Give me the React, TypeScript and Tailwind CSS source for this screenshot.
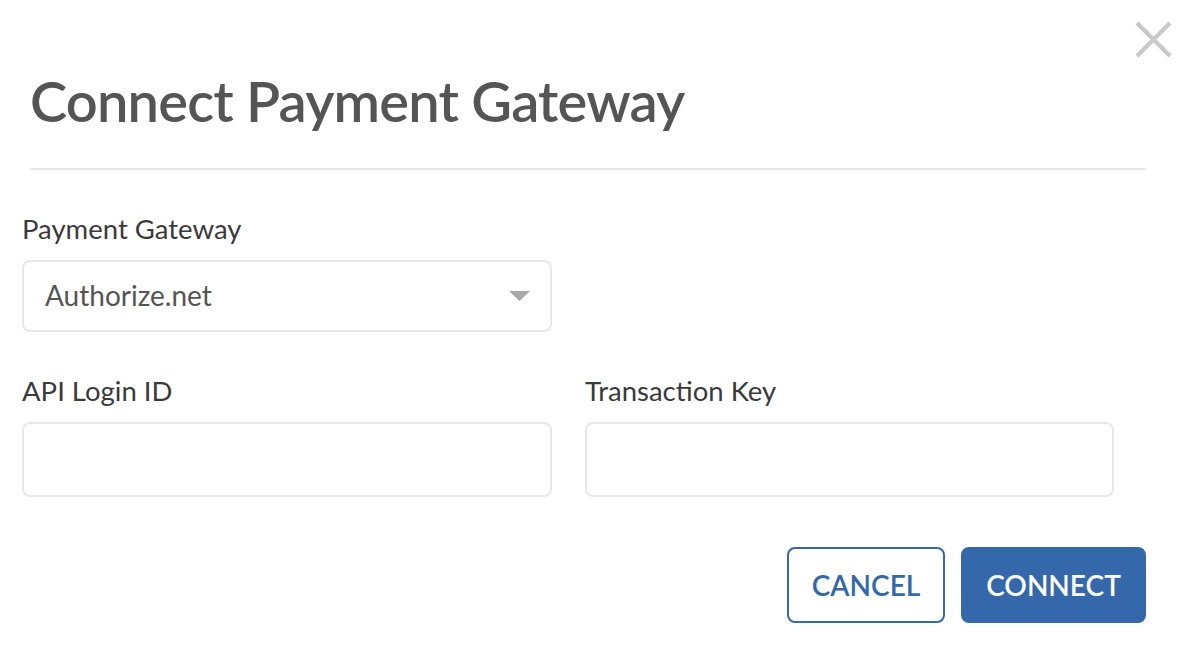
import { useState } from "react";

const BLUE = "#3567ab";

function CloseIcon() {
  return (
    <svg width="37" height="37" viewBox="0 0 37 37" fill="none">
      <path d="M2 2 L35 35 M35 2 L2 35" stroke="#c9c9c9" strokeWidth="4.2" />
    </svg>
  );
}

export default function App() {
  const [gateway, setGateway] = useState("Authorize.net");
  const [loginId, setLoginId] = useState("");
  const [txKey, setTxKey] = useState("");

  return (
    <div className="relative w-[1188px] h-[662px] bg-white font-['Lato','Noto_Sans',sans-serif] overflow-hidden">
      {/* Close button */}
      <button className="absolute left-[1135px] top-[21px]" aria-label="Close">
        <CloseIcon />
      </button>

      <div className="pl-[22px] pr-[42px] pt-[67px]">
        <h1 className="pl-[8px] text-[56px] leading-[1.2] font-semibold text-[#555555] tracking-[-0.8px]">
          Connect Payment Gateway
        </h1>
        <div className="ml-[8px] mt-[34px] h-[2px] bg-[#e6e6e6]" />

        {/* Gateway select */}
        <div className="mt-[42px] w-[530px]">
          <label className="block text-[27.5px] leading-[1.2] text-[#3a3a3a]">Payment Gateway</label>
          <div className="mt-[15px] h-[72px] border-2 border-[#e8e8e8] rounded-[8px] flex items-center pl-[21px] pr-[20px]">
            <span className="flex-1 text-[28px] leading-[1.2] text-[#555555]">{gateway}</span>
            <svg width="21" height="10" viewBox="0 0 21 10" onClick={() => setGateway("Authorize.net")}>
              <path d="M0 0 L21 0 L10.5 10 Z" fill="#a9a9a9" />
            </svg>
          </div>
        </div>

        {/* Credentials */}
        <div className="mt-[42px] grid grid-cols-[530px_529px] gap-x-[33px]">
          <div>
            <label className="block text-[27.5px] leading-[1.2] text-[#3a3a3a]">API Login ID</label>
            <input
              value={loginId}
              onChange={(e) => setLoginId(e.target.value)}
              className="mt-[15px] block w-full h-[75px] border-2 border-[#e8e8e8] rounded-[8px] px-[20px] text-[26px] outline-none"
            />
          </div>
          <div>
            <label className="block text-[27.5px] leading-[1.2] text-[#3a3a3a]">Transaction Key</label>
            <input
              value={txKey}
              onChange={(e) => setTxKey(e.target.value)}
              className="mt-[15px] block w-full h-[75px] border-2 border-[#e8e8e8] rounded-[8px] px-[20px] text-[26px] outline-none"
            />
          </div>
        </div>

        {/* Actions */}
        <div className="mt-[50px] flex justify-end gap-[16px]">
          <button
            className="h-[76px] w-[158px] rounded-[8px] border-2 bg-white text-[28px] font-semibold leading-none"
            style={{ borderColor: BLUE, color: BLUE }}
          >
            CANCEL
          </button>
          <button
            className="h-[76px] w-[185px] rounded-[8px] border-2 text-white text-[28px] font-semibold leading-none"
            style={{ borderColor: BLUE, backgroundColor: BLUE }}
          >
            CONNECT
          </button>
        </div>
      </div>
    </div>
  );
}
